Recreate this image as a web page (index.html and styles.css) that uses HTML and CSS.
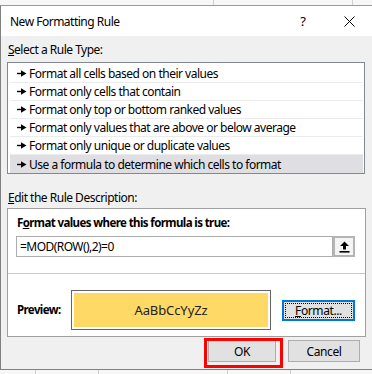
FILE: index.html
```html
<!DOCTYPE html>
<html>
<head>
<meta charset="utf-8">
<link rel="stylesheet" href="styles.css">
</head>
<body>
<div class="sheet sheet-top"></div>
<div class="dialog">
  <div class="titlebar">
    <span class="title">New Formatting Rule</span>
    <span class="tb-btn help">?</span>
    <span class="tb-btn close"><svg width="11" height="11" viewBox="0 0 11 11"><path d="M0.5 0.5 L10.5 10.5 M10.5 0.5 L0.5 10.5" stroke="#000" stroke-width="1" fill="none"/></svg></span>
  </div>
  <div class="body">
    <div class="label"><u>S</u>elect a Rule Type:</div>
    <ul class="rule-list">
      <li class="rule"><svg class="bullet" width="10" height="7" viewBox="0 0 10 7"><path d="M0 3.5h5" stroke="#000" stroke-width="1.4"/><path d="M4 0.2 L9.5 3.5 L4 6.8 Z" fill="#000"/></svg>Format all cells based on their values</li>
      <li class="rule"><svg class="bullet" width="10" height="7" viewBox="0 0 10 7"><path d="M0 3.5h5" stroke="#000" stroke-width="1.4"/><path d="M4 0.2 L9.5 3.5 L4 6.8 Z" fill="#000"/></svg>Format only cells that contain</li>
      <li class="rule"><svg class="bullet" width="10" height="7" viewBox="0 0 10 7"><path d="M0 3.5h5" stroke="#000" stroke-width="1.4"/><path d="M4 0.2 L9.5 3.5 L4 6.8 Z" fill="#000"/></svg>Format only top or bottom ranked values</li>
      <li class="rule"><svg class="bullet" width="10" height="7" viewBox="0 0 10 7"><path d="M0 3.5h5" stroke="#000" stroke-width="1.4"/><path d="M4 0.2 L9.5 3.5 L4 6.8 Z" fill="#000"/></svg>Format only values that are above or below average</li>
      <li class="rule"><svg class="bullet" width="10" height="7" viewBox="0 0 10 7"><path d="M0 3.5h5" stroke="#000" stroke-width="1.4"/><path d="M4 0.2 L9.5 3.5 L4 6.8 Z" fill="#000"/></svg>Format only unique or duplicate values</li>
      <li class="rule selected"><svg class="bullet" width="10" height="7" viewBox="0 0 10 7"><path d="M0 3.5h5" stroke="#000" stroke-width="1.4"/><path d="M4 0.2 L9.5 3.5 L4 6.8 Z" fill="#000"/></svg>Use a formula to determine which cells to format</li>
    </ul>
    <div class="label label-edit"><u>E</u>dit the Rule Description:</div>
    <div class="desc">
      <div class="bold-label">F<u>o</u>rmat values where this formula is true:</div>
      <div class="formula-row">
        <div class="input">=MOD(ROW(),2)=0</div>
        <div class="ref-btn"><svg width="11" height="12" viewBox="0 0 11 12"><path d="M5.5 0.5 L10 5 L7 5 L7 8.5 L4 8.5 L4 5 L1 5 Z" fill="#000"/><rect x="0.5" y="10" width="10" height="1.6" fill="#000"/></svg></div>
      </div>
      <div class="sep"></div>
      <div class="preview-row">
        <span class="bold-label preview-label">Preview:</span>
        <div class="preview"><div class="swatch">AaBbCcYyZz</div></div>
        <div class="btn btn-format"><span class="focus-rect"><u>F</u>ormat...</span></div>
      </div>
    </div>
    <div class="actions">
      <div class="ok-wrap">
        <div class="btn btn-ok">OK</div>
        <span class="highlight"></span>
      </div>
      <div class="btn btn-cancel">Cancel</div>
    </div>
  </div>
</div>
<div class="sheet sheet-bottom"></div>
</body>
</html>
```
FILE: styles.css
```css
* { box-sizing: border-box; }
html, body {
  margin: 0;
  padding: 0;
  width: 372px;
  height: 374px;
  overflow: hidden;
  background: #fff;
  font-family: "Noto Sans", "Liberation Sans", sans-serif;
  font-size: 12px;
  color: #000;
}
.sheet {
  background-color: #f7f7f7;
}
.sheet-top {
  height: 5px;
  background-image:
    linear-gradient(#d0d0d0, #d0d0d0),
    linear-gradient(#d0d0d0, #d0d0d0);
  background-size: 1px 100%, 1px 100%;
  background-position: 213px 0, 352px 0;
  background-repeat: no-repeat;
}
.sheet-bottom {
  height: 5px;
  background-image:
    linear-gradient(#d0d0d0, #d0d0d0),
    linear-gradient(#d0d0d0, #d0d0d0),
    linear-gradient(#d0d0d0, #d0d0d0),
    linear-gradient(#d0d0d0, #d0d0d0);
  background-size: 1px 100%, 1px 100%, 1px 100%, 1px 100%;
  background-position: 35px 0, 98px 0, 227px 0, 290px 0;
  background-repeat: no-repeat;
}
.dialog {
  width: 372px;
  border-left: 1px solid #808080;
  border-top: 1px solid #9a9a9a;
  border-bottom: 1px solid #808080;
}
.titlebar {
  height: 30px;
  background: #fff;
  display: flex;
  align-items: center;
  padding-left: 9px;
}
.title {
  flex: 1;
  letter-spacing: -0.5px;
}
.tb-btn {
  width: 46px;
  height: 30px;
  display: flex;
  align-items: center;
  justify-content: center;
}
.help {
  font-size: 13px;
}
.body {
  background: #f0f0f0;
  padding: 6px 0 7px 6px;
}
.label {
  line-height: 16px;
  padding-left: 1px;
  margin-bottom: 4px;
  letter-spacing: -0.5px;
}
.label-edit {
  margin-top: 16px;
  margin-bottom: 2px;
}
.rule-list {
  list-style: none;
  margin: 0;
  width: 358px;
  height: 112px;
  border: 1px solid #828790;
  background: #fff;
  padding: 2px 1px 0 2px;
}
.rule {
  height: 18px;
  border-bottom: 1px solid #ececec;
  display: flex;
  align-items: center;
  padding-left: 7px;
  letter-spacing: -0.5px;
  white-space: nowrap;
}
.rule.selected {
  border-bottom: none;
  background: #dedee3;
}
.bullet {
  margin-right: 2px;
  flex: none;
}
.desc {
  width: 359px;
  border: 1px solid #a0a0a0;
  background: #fff;
  padding: 6px 8px 6px 8px;
}
.bold-label {
  font-weight: bold;
  font-size: 11.5px;
  line-height: 16px;
  padding-left: 1px;
  letter-spacing: -0.6px;
}
.formula-row {
  display: flex;
  margin-top: 5px;
  height: 21px;
}
.input {
  width: 317px;
  height: 21px;
  border: 1px solid #adadad;
  padding-left: 3px;
  line-height: 19px;
  letter-spacing: -0.55px;
}
.ref-btn {
  width: 22px;
  height: 21px;
  border: 2px solid #b4b4b4;
  background: #f4f4f4;
  display: flex;
  align-items: center;
  justify-content: center;
}
.sep {
  height: 1px;
  background: #c8c8c8;
  margin: 16px -8px 16px -8px;
}
.preview-row {
  display: flex;
  align-items: center;
  height: 40px;
}
.preview-label {
  width: 55px;
  flex: none;
}
.preview {
  width: 200px;
  height: 40px;
  border: 1px solid #646464;
  padding: 2px;
  background: #fff;
  flex: none;
}
.swatch {
  height: 100%;
  background: #ffd966;
  display: flex;
  align-items: center;
  justify-content: center;
  font-size: 13px;
  color: #222;
  letter-spacing: -0.1px;
}
.btn {
  height: 22px;
  border: 1px solid #adadad;
  background: #e1e1e1;
  display: flex;
  align-items: center;
  justify-content: center;
  letter-spacing: -0.4px;
}
.btn-format {
  width: 73px;
  height: 21px;
  margin-left: 11px;
  border: 2px solid #0078d7;
  padding: 1px;
}
.focus-rect {
  display: flex;
  align-items: center;
  justify-content: center;
  width: 100%;
  height: 100%;
  border: 1px dotted #000;
}
.actions {
  display: flex;
  justify-content: flex-end;
  gap: 12px;
  margin-top: 3px;
  padding-right: 12px;
}
.ok-wrap {
  position: relative;
}
.btn-ok {
  width: 68px;
}
.btn-cancel {
  width: 72px;
}
.highlight {
  position: absolute;
  left: -4px;
  top: -2px;
  width: 79px;
  height: 30px;
  border: 3px solid #ff0000;
}
```
